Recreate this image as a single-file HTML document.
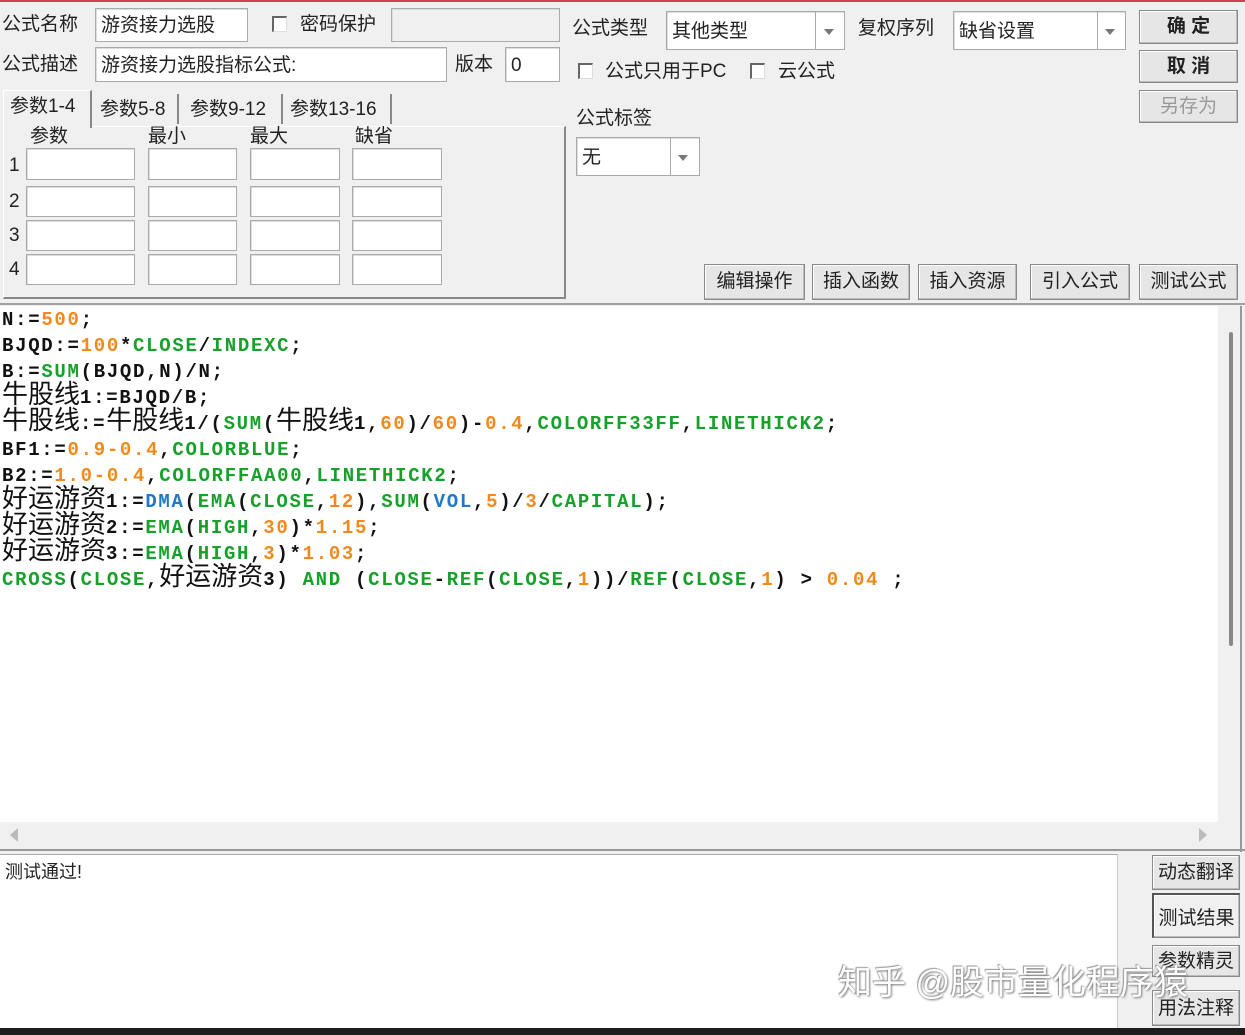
<!DOCTYPE html>
<html><head><meta charset="utf-8"><style>
*{margin:0;padding:0;box-sizing:border-box}
body{width:1245px;height:1035px;background:#f0f0f0;position:relative;overflow:hidden;font-family:"Liberation Sans","Noto Sans CJK SC",sans-serif;font-size:19px;color:#222}
.a{position:absolute}
.in{position:absolute;background:#fff;border:1px solid #aaa;box-shadow:inset 1px 1px 0 #ddd}
.lbl{position:absolute;white-space:nowrap;line-height:1}
.btn{position:absolute;background:#e6e6e6;border:1px solid #8a8a8a;box-shadow:inset -1px -1px 0 #bbb,inset 1px 1px 0 #fff;text-align:center;white-space:nowrap;font-size:19px}
.cb{position:absolute;width:15px;height:16px;background:#fff;border-left:2px solid #666;border-top:2px solid #666;border-right:1px solid #ddd;border-bottom:1px solid #ddd}
.dd{position:absolute;top:0;bottom:0;width:1px;background:#aaa}
.arr{position:absolute;width:0;height:0;border-left:5px solid transparent;border-right:5px solid transparent;border-top:6px solid #777}
.code{position:absolute;left:2px;top:307px;font-family:"Liberation Mono","Noto Sans CJK SC",monospace;font-weight:bold;font-size:19px;letter-spacing:1.7px;color:#111}
.code div{height:26px;line-height:26px;white-space:pre;overflow:visible}
.code .c{font-family:"Noto Sans CJK SC",sans-serif;font-weight:normal;font-size:26px;letter-spacing:0;line-height:0}
.o{color:#f08a1c}.g{color:#17a02a}.b{color:#1f78c8}
</style></head><body>
<div class="a" style="left:0;top:0;width:1245px;height:2px;background:#d04050"></div>

<div class="lbl" style="left:2px;top:15px">公式名称</div>
<div class="in" style="left:95px;top:8px;width:153px;height:34px"><span class="lbl" style="left:5px;top:7px">游资接力选股</span></div>
<div class="cb" style="left:272px;top:16px"></div>
<div class="lbl" style="left:300px;top:15px">密码保护</div>
<div class="in" style="left:391px;top:8px;width:169px;height:34px;background:#f0f0f0"></div>

<div class="lbl" style="left:2px;top:55px">公式描述</div>
<div class="in" style="left:95px;top:47px;width:352px;height:35px"><span class="lbl" style="left:5px;top:8px">游资接力选股指标公式:</span></div>
<div class="lbl" style="left:455px;top:55px">版本</div>
<div class="in" style="left:505px;top:47px;width:55px;height:35px"><span class="lbl" style="left:5px;top:8px">0</span></div>

<div class="a" style="left:3px;top:126px;width:563px;height:173px;border:1px solid #fff;border-right:2px solid #888;border-bottom:2px solid #888"></div>
<div class="a" style="left:3px;top:90px;width:89px;height:38px;background:#f0f0f0;border:1px solid #fff;border-right:2px solid #888;border-bottom:none"></div>
<div class="lbl" style="left:10px;top:97px">参数1-4</div>
<div class="lbl" style="left:100px;top:100px">参数5-8</div>
<div class="a" style="left:177px;top:94px;width:2px;height:30px;background:#888"></div>
<div class="lbl" style="left:190px;top:100px">参数9-12</div>
<div class="a" style="left:281px;top:94px;width:2px;height:30px;background:#888"></div>
<div class="lbl" style="left:290px;top:100px">参数13-16</div>
<div class="a" style="left:390px;top:94px;width:2px;height:30px;background:#888"></div>

<div class="lbl" style="left:30px;top:127px">参数</div>
<div class="lbl" style="left:148px;top:127px">最小</div>
<div class="lbl" style="left:250px;top:127px">最大</div>
<div class="lbl" style="left:355px;top:127px">缺省</div>
<div class="lbl" style="left:9px;top:156px">1</div>
<div class="lbl" style="left:9px;top:192px">2</div>
<div class="lbl" style="left:9px;top:226px">3</div>
<div class="lbl" style="left:9px;top:260px">4</div>
<div class="in" style="left:26px;top:148px;width:109px;height:32px"></div><div class="in" style="left:148px;top:148px;width:89px;height:32px"></div><div class="in" style="left:250px;top:148px;width:90px;height:32px"></div><div class="in" style="left:352px;top:148px;width:90px;height:32px"></div>
<div class="in" style="left:26px;top:186px;width:109px;height:31px"></div><div class="in" style="left:148px;top:186px;width:89px;height:31px"></div><div class="in" style="left:250px;top:186px;width:90px;height:31px"></div><div class="in" style="left:352px;top:186px;width:90px;height:31px"></div>
<div class="in" style="left:26px;top:220px;width:109px;height:31px"></div><div class="in" style="left:148px;top:220px;width:89px;height:31px"></div><div class="in" style="left:250px;top:220px;width:90px;height:31px"></div><div class="in" style="left:352px;top:220px;width:90px;height:31px"></div>
<div class="in" style="left:26px;top:254px;width:109px;height:31px"></div><div class="in" style="left:148px;top:254px;width:89px;height:31px"></div><div class="in" style="left:250px;top:254px;width:90px;height:31px"></div><div class="in" style="left:352px;top:254px;width:90px;height:31px"></div>

<div class="lbl" style="left:572px;top:19px">公式类型</div>
<div class="in" style="left:666px;top:11px;width:179px;height:39px"><span class="lbl" style="left:5px;top:10px">其他类型</span><div class="dd" style="left:148px"></div><div class="arr" style="left:157px;top:17px"></div></div>
<div class="lbl" style="left:858px;top:19px">复权序列</div>
<div class="in" style="left:953px;top:11px;width:173px;height:39px"><span class="lbl" style="left:5px;top:10px">缺省设置</span><div class="dd" style="left:143px"></div><div class="arr" style="left:151px;top:17px"></div></div>
<div class="btn" style="left:1139px;top:10px;width:99px;height:34px;line-height:32px;font-weight:bold">确 定</div>
<div class="btn" style="left:1139px;top:50px;width:99px;height:33px;line-height:31px;font-weight:bold">取 消</div>
<div class="btn" style="left:1139px;top:90px;width:99px;height:33px;line-height:31px;color:#999">另存为</div>

<div class="cb" style="left:578px;top:63px"></div>
<div class="lbl" style="left:605px;top:62px">公式只用于PC</div>
<div class="cb" style="left:750px;top:63px"></div>
<div class="lbl" style="left:778px;top:62px">云公式</div>
<div class="lbl" style="left:576px;top:109px">公式标签</div>
<div class="in" style="left:576px;top:137px;width:124px;height:39px"><span class="lbl" style="left:5px;top:10px">无</span><div class="dd" style="left:93px"></div><div class="arr" style="left:101px;top:17px"></div></div>

<div class="btn" style="left:704px;top:264px;width:101px;height:36px;line-height:34px">编辑操作</div>
<div class="btn" style="left:812px;top:264px;width:98px;height:36px;line-height:34px">插入函数</div>
<div class="btn" style="left:918px;top:264px;width:99px;height:36px;line-height:34px">插入资源</div>
<div class="btn" style="left:1030px;top:264px;width:100px;height:36px;line-height:34px">引入公式</div>
<div class="btn" style="left:1139px;top:264px;width:99px;height:36px;line-height:34px">测试公式</div>

<div class="a" style="left:0;top:303px;width:1245px;height:2px;background:#a0a0a0"></div>
<div class="a" style="left:0;top:306px;width:1218px;height:516px;background:#fff"></div>
<div class="a" style="left:1218px;top:306px;width:22px;height:542px;background:#f0f0f0"></div>
<div class="a" style="left:1229px;top:332px;width:4px;height:314px;background:#888;border-radius:2px"></div>
<div class="a" style="left:1240px;top:306px;width:2px;height:546px;background:#999"></div>
<div class="a" style="left:0;top:822px;width:1218px;height:26px;background:#f0f0f0"></div>
<div class="a" style="left:10px;top:828px;width:0;height:0;border-top:7px solid transparent;border-bottom:7px solid transparent;border-right:8px solid #bbb"></div>
<div class="a" style="left:1199px;top:828px;width:0;height:0;border-top:7px solid transparent;border-bottom:7px solid transparent;border-left:8px solid #bbb"></div>
<div class="a" style="left:0;top:849px;width:1245px;height:2px;background:#999"></div>
<div class="code">
<div>N:=<span class="o">500</span>;</div>
<div>BJQD:=<span class="o">100</span>*<span class="g">CLOSE</span>/<span class="g">INDEXC</span>;</div>
<div>B:=<span class="g">SUM</span>(BJQD,N)/N;</div>
<div><span class="c">牛股线</span>1:=BJQD/B;</div>
<div><span class="c">牛股线</span>:=<span class="c">牛股线</span>1/(<span class="g">SUM</span>(<span class="c">牛股线</span>1,<span class="o">60</span>)/<span class="o">60</span>)-<span class="o">0.4</span>,<span class="g">COLORFF33FF</span>,<span class="g">LINETHICK2</span>;</div>
<div>BF1:=<span class="o">0.9-0.4</span>,<span class="g">COLORBLUE</span>;</div>
<div>B2:=<span class="o">1.0-0.4</span>,<span class="g">COLORFFAA00</span>,<span class="g">LINETHICK2</span>;</div>
<div><span class="c">好运游资</span>1:=<span class="b">DMA</span>(<span class="g">EMA</span>(<span class="g">CLOSE</span>,<span class="o">12</span>),<span class="g">SUM</span>(<span class="b">VOL</span>,<span class="o">5</span>)/<span class="o">3</span>/<span class="g">CAPITAL</span>);</div>
<div><span class="c">好运游资</span>2:=<span class="g">EMA</span>(<span class="g">HIGH</span>,<span class="o">30</span>)*<span class="o">1.15</span>;</div>
<div><span class="c">好运游资</span>3:=<span class="g">EMA</span>(<span class="g">HIGH</span>,<span class="o">3</span>)*<span class="o">1.03</span>;</div>
<div><span class="g">CROSS</span>(<span class="g">CLOSE</span>,<span class="c">好运游资</span>3) <span class="g">AND</span> (<span class="g">CLOSE</span>-<span class="g">REF</span>(<span class="g">CLOSE</span>,<span class="o">1</span>))/<span class="g">REF</span>(<span class="g">CLOSE</span>,<span class="o">1</span>) &gt; <span class="o">0.04</span> ;</div>
</div>

<div class="a" style="left:0;top:854px;width:1118px;height:174px;background:#fff;border-top:1px solid #aaa;border-right:1px solid #ccc"></div>
<div class="lbl" style="left:5px;top:863px;font-size:18px">测试通过!</div>
<div class="btn" style="left:1152px;top:855px;width:88px;height:35px;line-height:33px">动态翻译</div>
<div class="btn" style="left:1152px;top:893px;width:88px;height:45px;line-height:48px;border-left:2px solid #555;border-top:2px solid #555;background:#f0f0f0">测试结果</div>
<div class="btn" style="left:1152px;top:945px;width:88px;height:32px;line-height:32px">参数精灵</div>
<div class="btn" style="left:1152px;top:990px;width:88px;height:36px;line-height:36px">用法注释</div>
<div class="lbl" style="left:838px;top:966px;font-size:34px;color:#fff;text-shadow:1px 1px 2px #777,-1px -1px 1px #999">知乎 @股市量化程序猿</div>
<div class="a" style="left:0;top:1028px;width:1245px;height:7px;background:#1e1e1e"></div>
</body></html>
